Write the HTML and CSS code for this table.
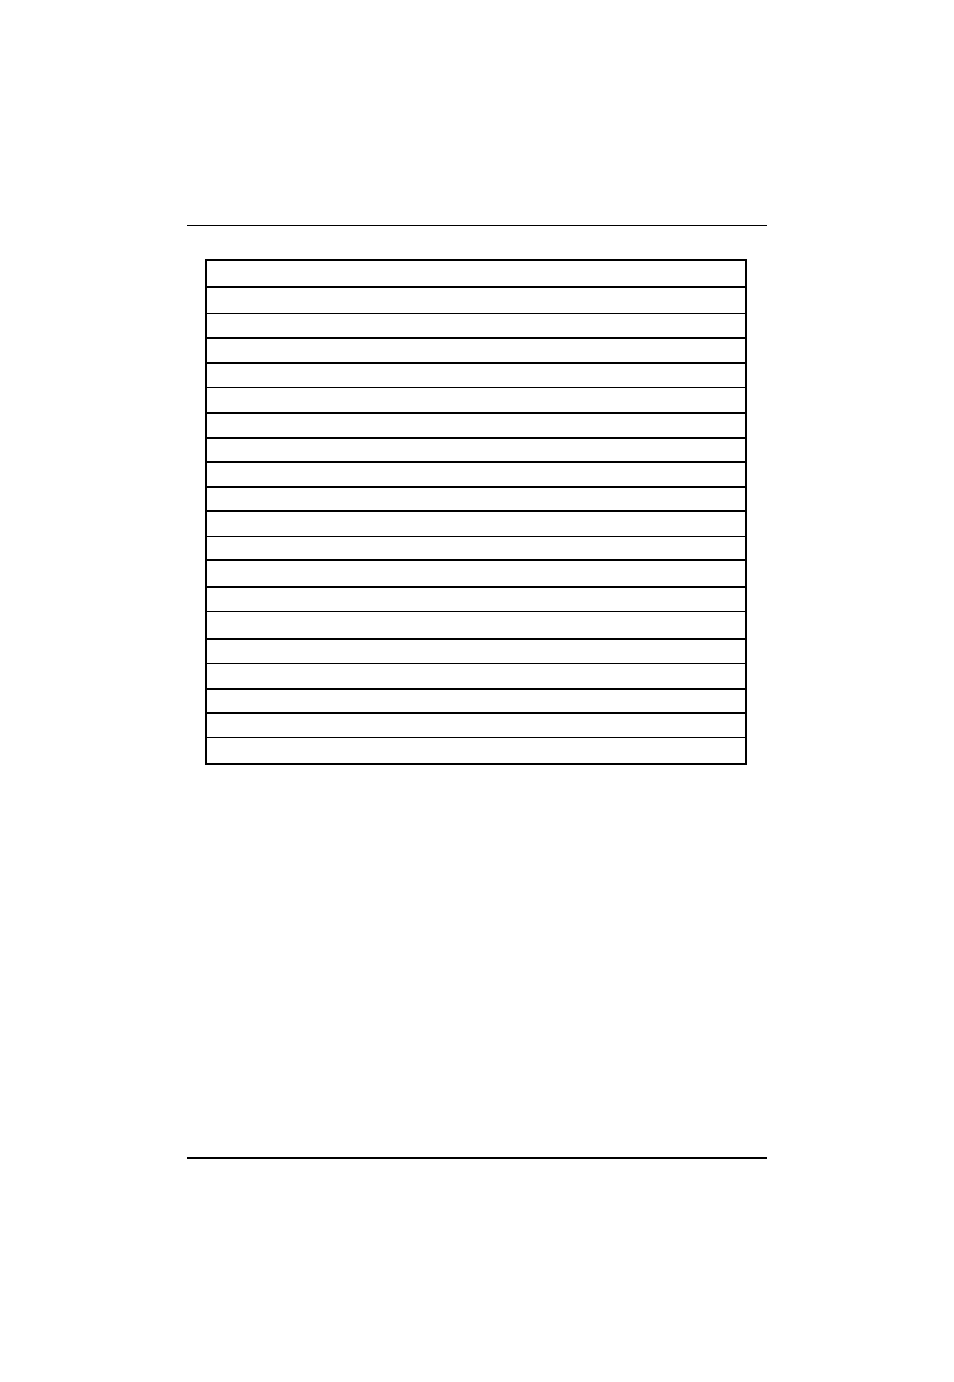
FILE: index.html
```html
<!DOCTYPE html>
<html lang="en">
<head>
<meta charset="utf-8">
<title>Page</title>
<link rel="stylesheet" href="styles.css">
</head>
<body>
<div class="page">
  <div class="rule-top"></div>
  <div class="grid">
    <div class="row h25"></div>
    <div class="row thick h25"></div>
    <div class="row thin h23"></div>
    <div class="row thick h23"></div>
    <div class="row thick h23"></div>
    <div class="row thin h24"></div>
    <div class="row thick h23"></div>
    <div class="row thick h22"></div>
    <div class="row thick h23"></div>
    <div class="row thick h22"></div>
    <div class="row thick h24"></div>
    <div class="row thin h22"></div>
    <div class="row thick h25"></div>
    <div class="row thick h23"></div>
    <div class="row thin h26"></div>
    <div class="row thick h23"></div>
    <div class="row thin h24"></div>
    <div class="row thick h22"></div>
    <div class="row thick h23"></div>
    <div class="row thin h25"></div>
  </div>
  <div class="rule-bottom"></div>
</div>
</body>
</html>
```

FILE: styles.css
```css
html, body {
  margin: 0;
  padding: 0;
  background: #fff;
  font-family: "Liberation Sans", Arial, sans-serif;
}
.page {
  width: 580px;
  margin-left: 187px;
  padding-top: 225px;
}
.rule-top {
  border-top: 1px solid #000;
}
.grid {
  margin: 33px 0 0 18px;
  width: 538px;
  border: 2px solid #000;
}
.row { box-sizing: content-box; }
.thick { border-top: 2px solid #000; }
.thin { border-top: 1px solid #000; }
.h22 { height: 22px; }
.h23 { height: 23px; }
.h24 { height: 24px; }
.h25 { height: 25px; }
.h26 { height: 26px; }
.rule-bottom {
  margin-top: 392px;
  border-top: 2px solid #000;
}
```
